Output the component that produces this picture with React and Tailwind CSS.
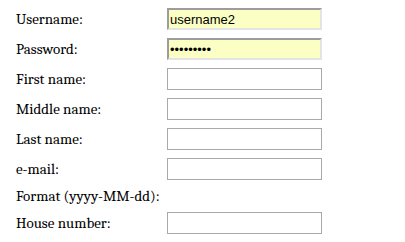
const fields = [
  { id: "username", label: "Username:", filled: true, value: "username2" },
  { id: "password", label: "Password:", filled: true, value: "secret123", type: "password" },
  { id: "first", label: "First name:" },
  { id: "middle", label: "Middle name:" },
  { id: "last", label: "Last name:" },
  { id: "email", label: "e-mail:" },
  { id: "format", label: "Format (yyyy-MM-dd):", noInput: true },
  { id: "house", label: "House number:" },
];

const RegisterForm = () => {
  return (
    <div className="min-h-screen bg-white pt-1 text-black">
      {fields.map((f) =>
        f.noInput ? (
          <div key={f.id} className="flex h-[24px] items-center pl-4">
            <span className="font-serif text-[15px] leading-none">{f.label}</span>
          </div>
        ) : (
          <div key={f.id} className="flex h-[30px] items-center">
            <label htmlFor={f.id} className="w-[167px] pl-4 font-serif text-[15px] leading-none">
              {f.label}
            </label>
            <input
              id={f.id}
              type={f.type || "text"}
              defaultValue={f.value || ""}
              className={
                f.filled
                  ? "h-[22px] w-[155px] border-2 border-t-[#9c9c9c] border-l-[#9c9c9c] border-r-[#e4e4e4] border-b-[#e4e4e4] bg-[#fcffc4] px-[1px] font-['Liberation_Sans'] text-[13px] outline-none"
                  : "h-[22px] w-[155px] border border-[#a9a9a9] bg-white px-[2px] font-['Liberation_Sans'] text-[13px] outline-none"
              }
            />
          </div>
        )
      )}
    </div>
  );
};

export default RegisterForm;
